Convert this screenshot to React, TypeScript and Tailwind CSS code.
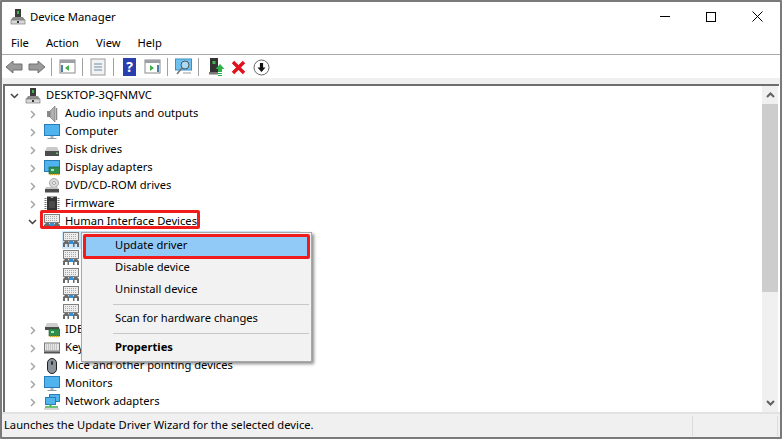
import React from 'react'

const Sep = () => <div className="w-px h-[18px] bg-[#a0a0a0] mx-[4px]" />

function DeviceIcon() {
  return (
    <svg width="16" height="16" viewBox="0 0 16 16">
      <rect x="5" y="0" width="6" height="8" fill="#3a3a3a" />
      <rect x="7" y="2" width="2" height="3" fill="#3fb54a" />
      <path d="M3 8h10l2 3v4H1v-4z" fill="#8e8e8e" />
      <rect x="1" y="11" width="14" height="4" fill="#d8d8d8" stroke="#6a6a6a" strokeWidth="0.6" />
      <rect x="7" y="12" width="2" height="2" fill="#333" />
    </svg>
  )
}

function SpeakerIcon() {
  return (
    <svg width="16" height="16" viewBox="0 0 16 16">
      <rect x="3" y="5" width="4" height="6" fill="#8a8a8a" />
      <path d="M6 5l5-5v16l-5-5z" fill="#b0b0b0" stroke="#6a6a6a" strokeWidth="0.6" />
      <path d="M12.500 2v12" stroke="#8a8a8a" strokeWidth="1.5" />
    </svg>
  )
}

function MonitorIcon() {
  return (
    <svg width="16" height="16" viewBox="0 0 16 16">
      <rect x="0.5" y="0.5" width="15" height="11" fill="#4fb3ee" stroke="#2a7cb8" />
      <rect x="6.500" y="12" width="3" height="2" fill="#a9b4bc" />
      <rect x="3.500" y="14" width="9" height="1" fill="#8f9aa2" />
    </svg>
  )
}

function DiskIcon() {
  return (
    <svg width="16" height="16" viewBox="0 0 16 16">
      <path d="M3 5h10l2 4H1z" fill="#c9c9c9" />
      <rect x="1" y="9" width="14" height="5" fill="#4d4d4d" />
      <rect x="12" y="10.500" width="2" height="1.500" fill="#5fd35f" />
    </svg>
  )
}

function DisplayIcon() {
  return (
    <svg width="16" height="16" viewBox="0 0 16 16">
      <rect x="0.5" y="0.5" width="15" height="11" fill="#4fb3ee" stroke="#2a7cb8" />
      <rect x="5" y="7" width="11" height="7" fill="#2f8f4e" stroke="#1c5f33" strokeWidth="0.6" />
      <rect x="7" y="9" width="3" height="2" fill="#a9e0b5" />
      <path d="M6 14.500h9" stroke="#d4a72c" strokeWidth="1.400" strokeDasharray="1 1" />
    </svg>
  )
}

function DvdIcon() {
  return (
    <svg width="16" height="16" viewBox="0 0 16 16">
      <circle cx="10" cy="5" r="4.500" fill="#dcdcdc" stroke="#8a8a8a" strokeWidth="0.7" />
      <circle cx="10" cy="5" r="1.500" fill="#fff" stroke="#777" strokeWidth="0.6" />
      <path d="M2 9h11l2 2H1z" fill="#c4c4c4" />
      <rect x="1" y="11" width="14" height="3.500" fill="#4d4d4d" />
    </svg>
  )
}

function ChipIcon() {
  return (
    <svg width="16" height="16" viewBox="0 0 16 16">
      <rect x="3" y="0.500" width="10" height="15" fill="#333" />
      <path d="M6.500 .5a1.500 1.500 0 0 0 3 0z" fill="#bbb" />
      <path d="M1.500 2v12M14.500 2v12" stroke="#777" strokeWidth="2" strokeDasharray="1 1" />
      <rect x="5" y="5" width="6" height="7" fill="#4a4a4a" />
    </svg>
  )
}

function HidIcon() {
  return (
    <svg width="16" height="16" viewBox="0 0 16 16">
      <rect x="0.500" y="0.500" width="15" height="8" fill="#eeeeee" stroke="#7f7f7f" />
      <path d="M2 2.500h12M2 4.500h12M2 6.500h12" stroke="#a8a8a8" strokeDasharray="1 1" />
      <path d="M0 15v-4l2-2h3l1 2v4H4.500v-3H2v3z" fill="#6a6a6a" />
      <path d="M10 15v-4l1-2h3l2 2v4h-2v-3h-2.500v3z" fill="#6a6a6a" />
      <rect x="6" y="9" width="4" height="3" fill="#2f8fd8" />
    </svg>
  )
}

function IdeIcon() {
  return (
    <svg width="16" height="16" viewBox="0 0 16 16">
      <path d="M3 1h10l2 4H1z" fill="#cfcfcf" />
      <rect x="1" y="5" width="14" height="3" fill="#4d4d4d" />
      <rect x="5" y="7" width="11" height="7" fill="#2f8f4e" stroke="#1c5f33" strokeWidth="0.6" />
      <rect x="7" y="9" width="3" height="2" fill="#a9e0b5" />
      <path d="M6 14.500h9" stroke="#d4a72c" strokeWidth="1.400" strokeDasharray="1 1" />
    </svg>
  )
}

function KeyboardIcon() {
  return (
    <svg width="16" height="16" viewBox="0 0 16 16">
      <rect x="0.500" y="3" width="15" height="8" fill="#e6e6e6" stroke="#7a7a7a" />
      <path d="M2 5h12M2 7h12M2 9h12" stroke="#a2a2a2" strokeDasharray="1 1" />
      <rect x="0" y="11.500" width="16" height="2" fill="#555" />
    </svg>
  )
}

function MouseIcon() {
  return (
    <svg width="16" height="16" viewBox="0 0 16 16">
      <rect x="3.500" y="0.500" width="9" height="15" rx="4.500" fill="#8b949c" stroke="#222" />
      <rect x="7" y="3" width="2" height="4" rx="1" fill="#333" />
    </svg>
  )
}

function NetworkIcon() {
  return (
    <svg width="16" height="16" viewBox="0 0 16 16">
      <rect x="5.500" y="0.500" width="10" height="7" fill="#4fb3ee" stroke="#2a7cb8" />
      <rect x="1.500" y="3.500" width="10" height="7" fill="#4fb3ee" stroke="#2a7cb8" />
      <path d="M6.500 10.500v2" stroke="#3fae4a" strokeWidth="2" />
      <path d="M1 13h13" stroke="#3fae4a" strokeWidth="1.500" />
      <path d="M0 15h15" stroke="#c8c8c8" strokeWidth="1.500" />
    </svg>
  )
}

function Chevron({ open }: { open?: boolean }) {
  return open ? (
    <svg width="9" height="6" viewBox="0 0 9 6"><path d="M1 1l3.500 3.500L8 1" fill="none" stroke="#404040" strokeWidth="1.500" /></svg>
  ) : (
    <svg width="6" height="9" viewBox="0 0 6 9"><path d="M1 1l3.500 3.500L1 8" fill="none" stroke="#a6a6a6" strokeWidth="1.500" /></svg>
  )
}

function Row({ depth, label, icon, open, leaf, selected }: { depth: number, label?: string, icon: React.ReactNode, open?: boolean, leaf?: boolean, selected?: boolean }) {
  const pad = depth === 0 ? 'pl-[2px]' : depth === 1 ? 'pl-[20px]' : 'pl-[40px]'
  return (
    <div className={'h-[18px] flex items-center ' + pad}>
      <div className={'w-[15px] h-[18px] flex items-center justify-center ' + (depth === 1 ? 'mr-[4px]' : 'mr-[3px]')}>
        {!leaf && <Chevron open={open} />}
      </div>
      {selected ? (
        <div className="-ml-[1px] pl-[1px] w-[238px] h-[18px] bg-[#cce8ff] flex items-center">{icon}</div>
      ) : (
        <div className="w-[16px] h-[16px] flex items-center justify-center mr-[5px]">{icon}</div>
      )}
      {label && <span className="whitespace-nowrap pb-[2px]">{label}</span>}
    </div>
  )
}

function MenuItem({ label, bold, active }: { label: string, bold?: boolean, active?: boolean }) {
  return (
    <div className={'h-[22px] flex items-center pl-[31px] pb-[1px] ' + (bold ? 'font-bold ' : '') + (active ? 'bg-[#91c9f7]' : '')}>
      {label}
    </div>
  )
}

export default function App() {
  return (
    <div className="w-[782px] h-[439px] bg-white border-2 border-[#7a7a7a] rounded-[1px] flex flex-col overflow-hidden text-[11.2px] text-black font-['Noto_Sans','Open_Sans',sans-serif]">
      <div className="h-[31px] flex items-center pl-[8px] pb-[2px] shrink-0">
        <DeviceIcon />
        <span className="ml-[4px] pt-[2px] text-[11.3px]">Device Manager</span>
        <div className="ml-auto flex items-center">
          <div className="w-[46px] flex justify-center"><div className="w-[10px] h-px bg-black" /></div>
          <div className="w-[46px] flex justify-center"><div className="w-[10px] h-[10px] border border-black" /></div>
          <div className="w-[46px] flex justify-center">
            <svg width="11" height="11" viewBox="0 0 11 11"><path d="M.5.5l10 10M10.500.5l-10 10" stroke="#000" strokeWidth="1" /></svg>
          </div>
        </div>
      </div>
      <div className="h-[21px] flex items-center pl-[9px] gap-[17px] border-b border-[#a8a8a8] shrink-0 box-content">
        <span>File</span><span>Action</span><span>View</span><span>Help</span>
      </div>
      <div className="h-[23px] flex items-center pl-[3px] pt-[1px] shrink-0">
        <svg width="18" height="16" viewBox="0 0 18 16"><path d="M1 8l7-6v3h9v6H8v3z" fill="#9a9a9a" stroke="#707070" /></svg>
        <svg className="ml-[5px]" width="18" height="16" viewBox="0 0 18 16"><path d="M17 8l-7-6v3H1v6h9v3z" fill="#9a9a9a" stroke="#707070" /></svg>
        <div className="ml-[1px]"><Sep /></div>
        <svg className="ml-[3px]" width="18" height="16" viewBox="0 0 18 16">
          <rect x="1" y="1" width="15" height="13" fill="#fff" stroke="#8a8a8a" /><rect x="1" y="1" width="15" height="3" fill="#9aa0a6" />
          <path d="M10 6l-4 3 4 3z" fill="#3fae4a" /><path d="M3 6v7" stroke="#4a7fa8" strokeWidth="2" />
        </svg>
        <div className="ml-[1px]"><Sep /></div>
        <svg className="ml-[3px]" width="16" height="18" viewBox="0 0 16 18">
          <rect x="1" y="1" width="14" height="16" fill="#f2f2f2" stroke="#9a9a9a" /><path d="M4 6h8M4 9h8M4 12h8" stroke="#6d8ea8" />
        </svg>
        <div className="ml-[3px]"><Sep /></div>
        <div className="ml-[5px] w-[13px] h-[18px] bg-[#2a3fae] flex items-center justify-center text-white font-bold text-[14px] leading-none">?</div>
        <svg className="ml-[8px]" width="18" height="16" viewBox="0 0 18 16">
          <rect x="1" y="1" width="15" height="13" fill="#fff" stroke="#8a8a8a" /><rect x="1" y="1" width="15" height="3" fill="#9aa0a6" />
          <path d="M6 6l4 3-4 3z" fill="#3fae4a" /><path d="M14 6v7" stroke="#4a7fa8" strokeWidth="2" />
        </svg>
        <div className="ml-[1px]"><Sep /></div>
        <svg className="ml-[3px]" width="18" height="18" viewBox="0 0 18 18">
          <rect x="0.500" y="1" width="16" height="11" fill="#6ec1f0" stroke="#3d8fc4" /><circle cx="10" cy="7" r="4" fill="#a9dbf7" stroke="#555" />
          <path d="M7 10l-5 6" stroke="#777" strokeWidth="1.600" /><path d="M8 15h8" stroke="#999" />
        </svg>
        <div className="ml-[1px]"><Sep /></div>
        <svg className="ml-[6px]" width="16" height="18" viewBox="0 0 16 18">
          <rect x="1" y="0" width="8" height="14" fill="#333" /><rect x="3.500" y="3" width="3" height="3" fill="#3fb54a" />
          <rect x="0" y="14" width="9" height="2.500" fill="#777" />
          <path d="M11 6l4.500 5H13v3H9v-3H6.500z" fill="#2fb24a" /><path d="M9 15.500h4M9 17.500h4" stroke="#2fb24a" />
        </svg>
        <svg className="ml-[6px]" width="15" height="15" viewBox="0 0 15 15"><path d="M2 2l11 11M13 2L2 13" stroke="#e0101c" strokeWidth="3.400" /></svg>
        <svg className="ml-[7px]" width="17" height="17" viewBox="0 0 17 17">
          <circle cx="8.500" cy="8.500" r="7.500" fill="#fff" stroke="#666" /><path d="M8.500 13l-4-4.500h2.400V4h3.200v4.500h2.400z" fill="#111" />
        </svg>
      </div>
      <div className="h-[6px] bg-[#f0f0f0] shrink-0" />
      <div className="relative flex-1 flex min-h-0 border-t-2 border-l-2 border-[#6e6e6e] ml-[1px] mr-[1px]">
        <div className="flex-1 pt-[1px] overflow-hidden">
          <Row depth={0} label="DESKTOP-3QFNMVC" icon={<DeviceIcon />} open />
          <Row depth={1} label="Audio inputs and outputs" icon={<SpeakerIcon />} />
          <Row depth={1} label="Computer" icon={<MonitorIcon />} />
          <Row depth={1} label="Disk drives" icon={<DiskIcon />} />
          <Row depth={1} label="Display adapters" icon={<DisplayIcon />} />
          <Row depth={1} label="DVD/CD-ROM drives" icon={<DvdIcon />} />
          <Row depth={1} label="Firmware" icon={<ChipIcon />} />
          <Row depth={1} label="Human Interface Devices" icon={<HidIcon />} open />
          <Row depth={2} icon={<HidIcon />} leaf selected />
          <Row depth={2} icon={<HidIcon />} leaf />
          <Row depth={2} icon={<HidIcon />} leaf />
          <Row depth={2} icon={<HidIcon />} leaf />
          <Row depth={2} icon={<HidIcon />} leaf />
          <Row depth={1} label="IDE ATA/ATAPI controllers" icon={<IdeIcon />} />
          <Row depth={1} label="Keyboards" icon={<KeyboardIcon />} />
          <Row depth={1} label="Mice and other pointing devices" icon={<MouseIcon />} />
          <Row depth={1} label="Monitors" icon={<MonitorIcon />} />
          <Row depth={1} label="Network adapters" icon={<NetworkIcon />} />
        </div>
        <div className="w-[16px] mr-[1px] bg-[#f0f0f0] flex flex-col shrink-0">
          <div className="h-[18px] flex items-center justify-center">
            <svg width="9" height="6" viewBox="0 0 9 6"><path d="M1 5l3.500-3.500L8 5" fill="none" stroke="#606060" strokeWidth="2" /></svg>
          </div>
          <div className="h-[188px] bg-[#cdcdcd]" />
          <div className="flex-1" />
          <div className="h-[18px] flex items-center justify-center">
            <svg width="9" height="6" viewBox="0 0 9 6"><path d="M1 1l3.500 3.500L8 1" fill="none" stroke="#606060" strokeWidth="2" /></svg>
          </div>
        </div>
        {/* red annotation round the selected category */}
        <div className="absolute left-[35px] top-[124px] w-[160px] h-[19px] border-[3px] border-[#f01c1c] rounded-[2px]" />
        {/* context menu */}
        <div className="absolute left-[76px] top-[146px] w-[231px] h-[130px] bg-[#f2f2f2] border border-[#a8a8a8] shadow-[2px_2px_3px_rgba(0,0,0,0.45)] py-[2px] px-[2px]">
          <div className="relative">
            <MenuItem label="Update driver" active />
            <div className="absolute -left-[1px] -top-[1px] w-[227px] h-[25px] border-[3px] border-[#f01c1c] rounded-[2px]" />
          </div>
          <MenuItem label="Disable device" />
          <MenuItem label="Uninstall device" />
          <div className="h-px bg-[#c8c8c8] ml-[29px] my-[3px]" />
          <MenuItem label="Scan for hardware changes" />
          <div className="h-px bg-[#c8c8c8] ml-[29px] my-[3px]" />
          <MenuItem label="Properties" bold />
        </div>
      </div>
      <div className="h-[25px] bg-[#f0f0f0] border-t-2 border-[#e2e2e2] flex items-center shrink-0 pl-[2px]">
        <span className="flex-1">Launches the Update Driver Wizard for the selected device.</span>
        <div className="w-px h-[20px] bg-[#dcdcdc]" />
        <div className="w-[84px]" />
        <div className="w-px h-[20px] bg-[#dcdcdc] mr-[2px]" />
      </div>
    </div>
  )
}
